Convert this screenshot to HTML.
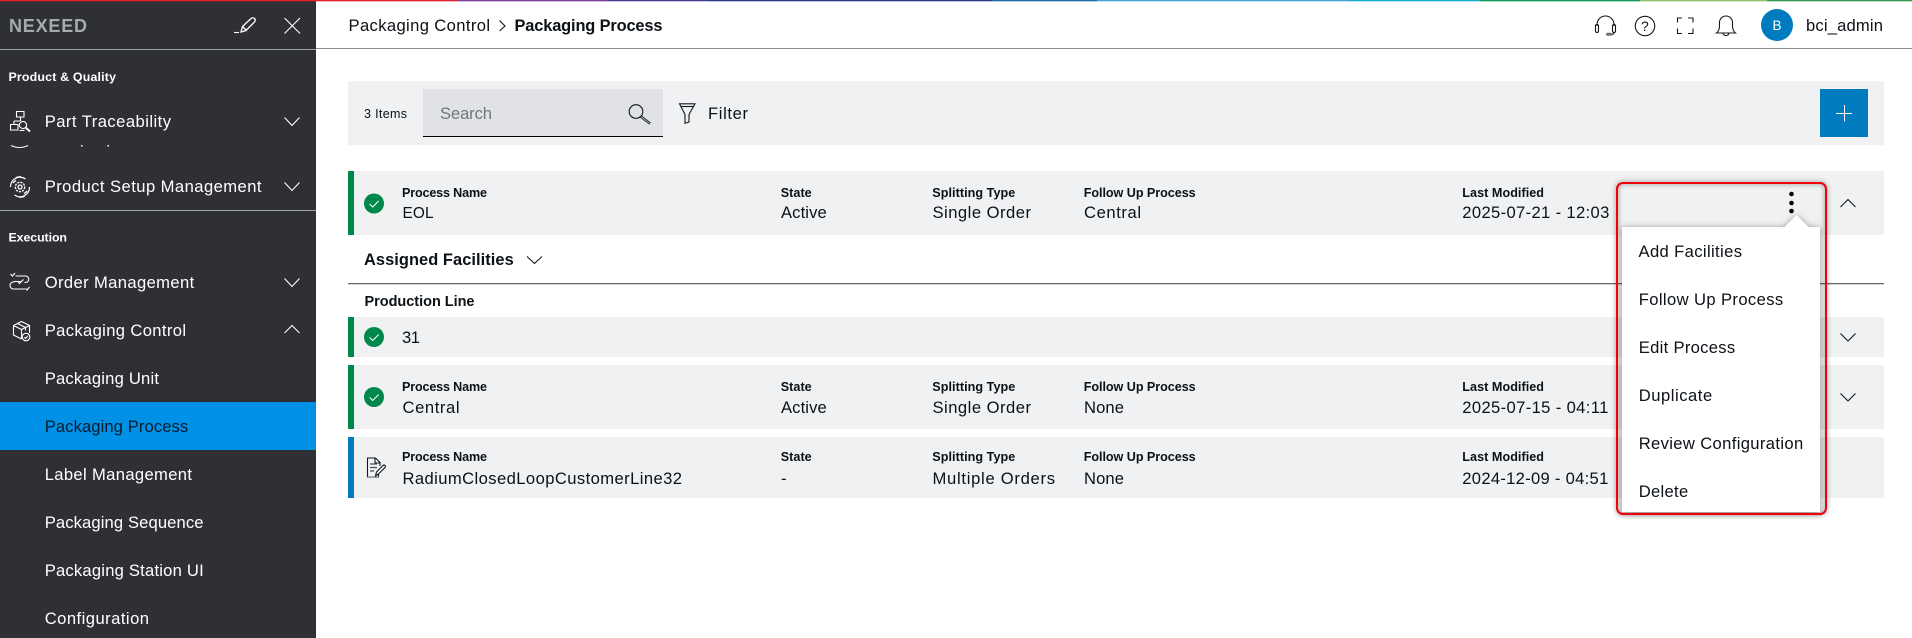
<!DOCTYPE html>
<html lang="en"><head><meta charset="utf-8"><title>Packaging Process</title>
<style>
html,body{margin:0;padding:0;width:1912px;height:638px;overflow:hidden;background:#fff}
svg{display:block}
text{font-family:"Liberation Sans",Arial,sans-serif;fill:#0c1116;font-size:16.6px}
.b{font-weight:700;font-size:16.4px}
.l{font-weight:700;font-size:12.6px}
.s{font-weight:700;font-size:12.4px}
.w{fill:#fff}
.ic{fill:none;stroke:#fff;stroke-width:1.1}
.ik{fill:none;stroke:#14181c;stroke-width:1.1}
.r{fill:#eff1f2}
</style></head><body>
<svg xmlns="http://www.w3.org/2000/svg" width="1912" height="638" viewBox="0 0 1912 638">
<defs>
<filter id="ms" x="-20%" y="-20%" width="140%" height="140%"><feDropShadow dx="0" dy="1" stdDeviation="3.5" flood-color="#000" flood-opacity=".45"/></filter>
<filter id="rs" x="-10%" y="-10%" width="120%" height="120%"><feGaussianBlur stdDeviation="2.5"/></filter>
</defs>
<rect width="1912" height="638" fill="#fff"/>

<!-- sidebar -->
<rect x="0" y="0" width="316" height="638" fill="#2e3035"/>
<text x="9" y="32" class="b" style="font-size:18px;fill:#a6a9ad" textLength="78">NEXEED</text>
<path class="ic" d="M234 32.500h5" />
<path d="M241 32l1.500-5.500 8.500-8q2-1.500 3.500 0t0 3.500l-8.500 8.500zM242.500 26.500l4 4" fill="none" stroke="#fff" stroke-width="1.300"/>
<path class="ic" d="M284.500 18L300 33.500M300 18L284.500 33.500"/>
<rect x="0" y="49" width="316" height="1" fill="#a0a4a9"/>
<text x="8.500" y="81" class="s w" textLength="107.500">Product &amp; Quality</text>

<!-- Part Traceability -->
<g class="ic">
<path d="M16.500 111.500h7.500v5.500h-7.500zM20.500 117v4M14 121h6M14 121v3.500M10.500 124.500h7.500v5.500h-7.500zM19.500 130.500h5"/>
<circle cx="23" cy="125" r="3.600"/><path d="M25.800 127.800L30 131.500" stroke-width="2"/>
</g>
<text x="44.700" y="127" class="w" textLength="126.300">Part Traceability</text>
<path class="ic" d="M284.500 117.500L292 125.500L299.500 117.500"/>
<path class="ic" d="M11 145.500q8.500 4 17 0"/>
<rect x="81" y="145" width="1.500" height="1.500" fill="#fff"/><rect x="107.500" y="145" width="1.500" height="1.500" fill="#fff"/>

<!-- Product Setup -->
<g class="ic" style="stroke-width:1.300">
<circle cx="20" cy="187" r="4.700" stroke-dasharray="2.200 1"/><circle cx="20" cy="187" r="2"/>
<path d="M10.500 187a9.500 9.500 0 0 1 15-8M16 177.500l5-1M29.500 187a9.500 9.500 0 0 1-15 8M24.500 196.500l-5 1"/>
<path d="M13 183a8 8 0 0 1 3-2.500M27 191a8 8 0 0 1-3 2.500"/>
</g>
<text x="44.700" y="192" class="w" textLength="216.800">Product Setup Management</text>
<path class="ic" d="M284.500 182.500L292 190.500L299.500 182.500"/>
<rect x="0" y="210" width="316" height="1" fill="#a0a4a9"/>
<text x="8.500" y="241.500" class="s w" textLength="58.500">Execution</text>

<!-- Order Management -->
<g class="ic">
<path d="M10.500 274l2 2 2.500-3M15.500 276h10a3 3 0 0 1 0 6.500h-1M14 282h-0.500a3.500 3.500 0 0 0 0 7H25"/>
<path d="M13.500 281.500H21"/><path d="M25.500 288.500l1.500 1.500 2.500-3"/><path d="M18 282l1.500 1.500 4-4"/>
</g>
<text x="44.700" y="288" class="w" textLength="149.500">Order Management</text>
<path class="ic" d="M284.500 278.500L292 286.500L299.500 278.500"/>

<!-- Packaging Control -->
<g class="ic">
<path d="M13.500 325.500l8-4 8 4v7.500M13.500 325.500v9.500l8 4M13.500 325.500l8 4 8-4M21.500 329.500v9.500M17.500 323.500l8 4v3"/>
<circle cx="26" cy="337" r="3.800"/><path d="M24.300 337.200l1.300 1.300 2.200-2.600"/>
</g>
<text x="44.700" y="336" class="w" textLength="141.300">Packaging Control</text>
<path class="ic" d="M284.500 333L292 325.500L299.500 333"/>
<rect x="0" y="354" width="316" height="48" fill="#2d2f34"/>
<text x="44.700" y="384" class="w" textLength="114.300">Packaging Unit</text>
<rect x="0" y="402" width="316" height="48" fill="#0091e6"/>
<text x="44.700" y="432" style="fill:#0a1b2c" textLength="143.500">Packaging Process</text>
<text x="44.700" y="480" class="w" textLength="147.300">Label Management</text>
<text x="44.700" y="528" class="w" textLength="158.800">Packaging Sequence</text>
<text x="44.700" y="576" class="w" textLength="159">Packaging Station UI</text>
<text x="44.700" y="624" class="w" textLength="104.300">Configuration</text>

<!-- top gradient strip -->
<g>
<rect x="0" y="0" width="457" height="1.300" fill="#e2202c"/>
<rect x="457" y="0" width="150" height="1.300" fill="#7a3a96"/>
<rect x="607" y="0" width="100" height="1.300" fill="#4a3f94"/>
<rect x="707" y="0" width="285" height="1.300" fill="#2a3f86"/>
<rect x="992" y="0" width="105" height="1.300" fill="#1c6aab"/>
<rect x="1097" y="0" width="253" height="1.300" fill="#3fa7d6"/>
<rect x="1350" y="0" width="130" height="1.300" fill="#11aac8"/>
<rect x="1480" y="0" width="160" height="1.300" fill="#0f9a5c"/>
<rect x="1640" y="0" width="127" height="1.300" fill="#8cc26a"/>
<rect x="1767" y="0" width="145" height="1.300" fill="#2e9a52"/>
</g>

<!-- header -->
<rect x="316" y="48" width="1596" height="1" fill="#8a9098"/>
<text x="348.500" y="31" textLength="141.500">Packaging Control</text>
<path class="ik" d="M499.500 20.500L505 26L499.500 31"/>
<text x="514.500" y="31" class="b" textLength="148">Packaging Process</text>

<g class="ik">
<path d="M1597 26v-1.500a8.500 8.500 0 0 1 17 0V26"/>
<rect x="1595.500" y="24.500" width="3" height="8" rx="1.500"/><rect x="1612.500" y="24.500" width="3" height="8" rx="1.500"/>
<path d="M1614 32.500q0 2.500-6 2.500"/>
</g>
<rect x="1606" y="32.700" width="6" height="3" rx="1.500" fill="#6b7076"/>
<circle cx="1645" cy="26" r="9.700" class="ik"/>
<text x="1641" y="31" style="font-size:14px" textLength="8">?</text>
<path class="ik" d="M1677.500 22.500v-4.500h4.500M1688 18h5v4.500M1693 28.500v5h-5M1682 33.500h-4.500v-5"/>
<path class="ik" d="M1716.500 33q3-2.500 3-7v-3.500a6.500 6.500 0 0 1 13 0V26q0 4.500 3 7zM1723 33a3 2.500 0 0 0 6 0M1725 16h2"/>
<circle cx="1777" cy="25" r="16" fill="#007bc0"/>
<text x="1772.500" y="30" class="w" style="font-size:13.500px" textLength="9">B</text>
<text x="1806" y="31" textLength="77">bci_admin</text>

<!-- toolbar -->
<rect class="r" x="348" y="81" width="1536" height="64"/>
<text x="364" y="118" style="font-size:12.500px" textLength="43">3 Items</text>
<rect x="423" y="89" width="240" height="47" fill="#e0e2e5"/>
<rect x="423" y="136" width="240" height="1" fill="#000"/>
<text x="440" y="119" style="fill:#71767c" textLength="52">Search</text>
<circle cx="636" cy="111.500" r="6.800" class="ik"/>
<path d="M640.800 116.500L650 123.500" stroke="#14181c" stroke-width="2.600" fill="none"/>
<path d="M641 116.700L649.500 123.200" stroke="#c8cbcf" stroke-width=".9" fill="none"/>
<path class="ik" d="M679.500 103.800H695L689 114.500V122L685 123.300V114.500Z"/>
<path class="ik" d="M681.500 106.500h11.500"/>
<text x="708" y="119" textLength="40">Filter</text>
<rect x="1820" y="89" width="48" height="48" fill="#007bc0"/>
<path d="M1836 113.500h16M1844.500 105v16.500" stroke="#fff" stroke-width="1" fill="none"/>

<!-- row 1 -->
<rect class="r" x="348" y="171" width="1536" height="64"/>
<rect x="348" y="171" width="6" height="64" fill="#00884a"/>
<circle cx="374" cy="203.500" r="10" fill="#00884a"/>
<path d="M369.700 204l3 3 6-6" stroke="#fff" fill="none" stroke-width="1"/>
<text x="402" y="197" class="l" textLength="85">Process Name</text>
<text x="402.500" y="218" style="font-size:15.400px" textLength="31">EOL</text>
<text x="780.700" y="197" class="l" textLength="31">State</text>
<text x="781" y="218" textLength="45.700">Active</text>
<text x="932.300" y="197" class="l" textLength="83">Splitting Type</text>
<text x="932.500" y="218" textLength="98.500">Single Order</text>
<text x="1083.700" y="197" class="l" textLength="112">Follow Up Process</text>
<text x="1084" y="218" textLength="57">Central</text>
<text x="1462.300" y="197" class="l" textLength="81.700">Last Modified</text>
<text x="1462.300" y="218" textLength="147">2025-07-21 - 12:03</text>
<path class="ik" d="M1840.500 207L1848 199.500L1855.500 207"/>

<!-- assigned -->
<text x="364" y="265" class="b" textLength="149.700">Assigned Facilities</text>
<path class="ik" d="M527 256.500L534.500 263.500L542 256.500"/>
<rect x="348" y="283" width="1536" height="1.300" fill="#656a6f"/>
<text x="364.500" y="306" class="b" style="font-size:14.500px" textLength="110">Production Line</text>

<!-- row 31 -->
<rect class="r" x="348" y="317" width="1536" height="40"/>
<rect x="348" y="317" width="6" height="40" fill="#00884a"/>
<circle cx="374" cy="337" r="10" fill="#00884a"/>
<path d="M369.700 337.500l3 3 6-6" stroke="#fff" fill="none" stroke-width="1"/>
<text x="402" y="343" textLength="18">31</text>
<path class="ik" d="M1840.500 333.500L1848 341L1855.500 333.500"/>

<!-- row central -->
<rect class="r" x="348" y="365" width="1536" height="64"/>
<rect x="348" y="365" width="6" height="64" fill="#00884a"/>
<circle cx="374" cy="397" r="10" fill="#00884a"/>
<path d="M369.700 397.500l3 3 6-6" stroke="#fff" fill="none" stroke-width="1"/>
<text x="402" y="391" class="l" textLength="85">Process Name</text>
<text x="402.500" y="413" textLength="57">Central</text>
<text x="780.700" y="391" class="l" textLength="31">State</text>
<text x="781" y="413" textLength="45.700">Active</text>
<text x="932.300" y="391" class="l" textLength="83">Splitting Type</text>
<text x="932.500" y="413" textLength="98.500">Single Order</text>
<text x="1083.700" y="391" class="l" textLength="112">Follow Up Process</text>
<text x="1084" y="413" textLength="40">None</text>
<text x="1462.300" y="391" class="l" textLength="81.700">Last Modified</text>
<text x="1462.300" y="413" textLength="146">2025-07-15 - 04:11</text>
<path class="ik" d="M1840.500 393.500L1848 401L1855.500 393.500"/>

<!-- row radium -->
<rect class="r" x="348" y="437" width="1536" height="61"/>
<rect x="348" y="437" width="6" height="61" fill="#007bc0"/>
<path class="ik" d="M378.500 473.500v3.500H367.500V458h8l4.500 4.500V466M375 458.500V463h5" stroke-width="1.200"/>
<path d="M370 464h7M370 467.500h7M370 471h4" stroke="#4a4f55" stroke-width="1.300" fill="none"/>
<path class="ik" d="M375.500 476l1-4 6.500-6.500q1-1 2 0t0 2l-6.500 6.500z"/>
<rect x="367" y="476.600" width="12" height="1.200" fill="#80858a"/>
<text x="402" y="461" class="l" textLength="85">Process Name</text>
<text x="402.500" y="484" textLength="279.500">RadiumClosedLoopCustomerLine32</text>
<text x="780.700" y="461" class="l" textLength="31">State</text>
<text x="781" y="484">-</text>
<text x="932.300" y="461" class="l" textLength="83">Splitting Type</text>
<text x="932.500" y="484" textLength="122.500">Multiple Orders</text>
<text x="1083.700" y="461" class="l" textLength="112">Follow Up Process</text>
<text x="1084" y="484" textLength="40">None</text>
<text x="1462.300" y="461" class="l" textLength="81.700">Last Modified</text>
<text x="1462.300" y="484" textLength="146">2024-12-09 - 04:51</text>

<!-- menu -->
<rect x="1617" y="183" width="209" height="331" rx="6" fill="none" stroke="#000" stroke-opacity=".35" stroke-width="3" filter="url(#rs)"/>
<g filter="url(#ms)">
<rect x="1622" y="227" width="198" height="285" fill="#fff"/>
<path d="M1784.500 227L1796.500 215L1808.500 227L1796.500 239Z" fill="#fff"/>
</g>
<circle cx="1791.500" cy="194" r="2.300" fill="#000"/><circle cx="1791.500" cy="203" r="2.300" fill="#000"/><circle cx="1791.500" cy="211" r="2.300" fill="#000"/>
<text x="1638.500" y="257" textLength="103.500">Add Facilities</text>
<text x="1638.700" y="305" textLength="144.500">Follow Up Process</text>
<text x="1638.700" y="353" textLength="96.500">Edit Process</text>
<text x="1638.700" y="401" textLength="73.500">Duplicate</text>
<text x="1638.700" y="449" textLength="164.500">Review Configuration</text>
<text x="1638.700" y="497" textLength="49.500">Delete</text>
<rect x="1617" y="183" width="209" height="331" rx="6" fill="none" stroke="#f4000c" stroke-width="2"/>
</svg>
</body></html>
